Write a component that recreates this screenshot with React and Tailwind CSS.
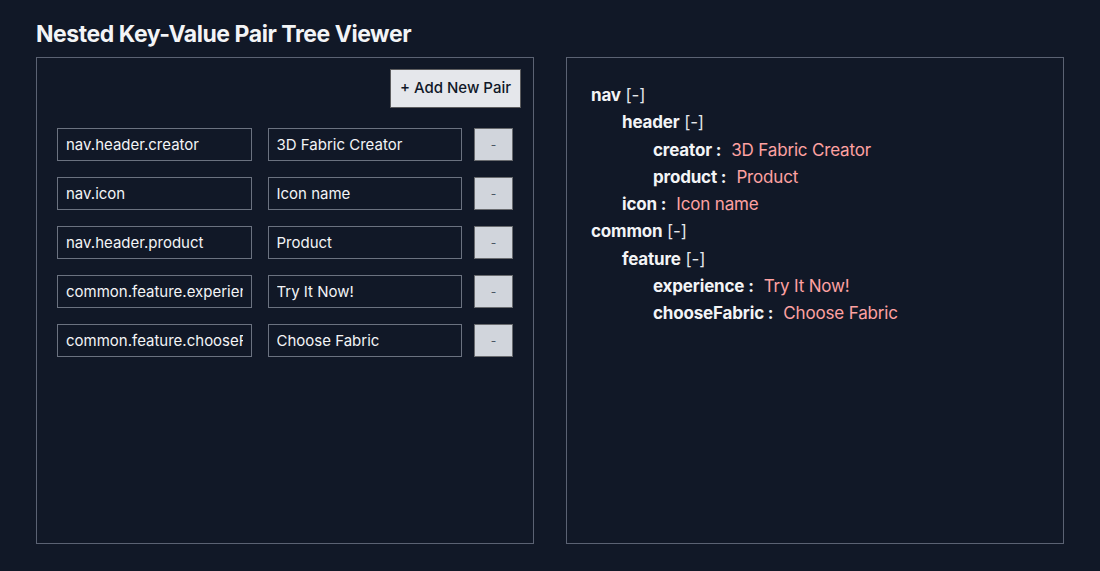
import { useState } from 'react'

// Пары ключ-значение, из которых строится дерево
const INITIAL_PAIRS = [
    { key: 'nav.header.creator', value: '3D Fabric Creator' },
    { key: 'nav.icon', value: 'Icon name' },
    { key: 'nav.header.product', value: 'Product' },
    { key: 'common.feature.experience', value: 'Try It Now!' },
    { key: 'common.feature.chooseFabric', value: 'Choose Fabric' },
]

// Собираем вложенный объект из ключей с точками
function buildTree(pairs) {
    const root = {}
    pairs.forEach(({ key, value }) => {
        const parts = key.split('.')
        let node = root
        parts.forEach((part, i) => {
            if (i === parts.length - 1) {
                node[part] = value
            } else {
                if (typeof node[part] !== 'object') node[part] = {}
                node = node[part]
            }
        })
    })
    return root
}

function TreeNode({ name, value }) {
    const [open, setOpen] = useState(true)

    if (typeof value === 'string') {
        return (
            <div className="flex">
                <span className="font-bold text-gray-100">{name} :</span>
                <span className="ml-[10px] text-red-300">{value}</span>
            </div>
        )
    }

    return (
        <div>
            <div>
                <span className="font-bold text-gray-100">{name}</span>{' '}
                <span className="cursor-pointer text-gray-200" onClick={() => setOpen(!open)}>
                    {open ? '[-]' : '[+]'}
                </span>
            </div>
            {open && (
                <div className="pl-[31px]">
                    {Object.entries(value).map(([k, v]) => (
                        <TreeNode key={k} name={k} value={v} />
                    ))}
                </div>
            )}
        </div>
    )
}

export default function App() {
    const [pairs, setPairs] = useState(INITIAL_PAIRS)

    const updatePair = (index, field, text) => {
        setPairs(pairs.map((p, i) => (i === index ? { ...p, [field]: text } : p)))
    }

    const removePair = (index) => {
        setPairs(pairs.filter((_, i) => i !== index))
    }

    const tree = buildTree(pairs)

    return (
        <div
            className="min-h-[571px] bg-[#111827] px-9 pt-[18px] pb-7 text-gray-100"
            style={{ fontFamily: 'Inter, "Noto Sans", sans-serif' }}
        >
            <h1 className="mb-[7px] text-[23px] leading-8 font-bold tracking-[-0.02em] text-gray-100">
                Nested Key-Value Pair Tree Viewer
            </h1>

            <div className="flex gap-8">
                {/* Левая панель — редактор пар */}
                <div className="h-[487px] w-[498px] shrink-0 border border-[#5b6273] px-3 pt-[11px] pb-3">
                    <div className="flex justify-end">
                        <button
                            onClick={() => setPairs([...pairs, { key: '', value: '' }])}
                            className="h-[39px] w-[131px] border border-black/60 bg-gray-200 text-[15px] font-medium text-gray-900"
                        >
                            + Add New Pair
                        </button>
                    </div>

                    <div className="mt-5 flex flex-col gap-4 px-2">
                        {pairs.map((pair, i) => (
                            <div key={i} className="flex items-center">
                                <input
                                    value={pair.key}
                                    onChange={(e) => updatePair(i, 'key', e.target.value)}
                                    className="h-[33px] w-0 flex-1 border border-[#6b7280] bg-transparent px-2 text-[15px] text-gray-100 outline-none"
                                />
                                <input
                                    value={pair.value}
                                    onChange={(e) => updatePair(i, 'value', e.target.value)}
                                    className="ml-4 h-[33px] w-0 flex-1 border border-[#6b7280] bg-transparent px-2 text-[15px] text-gray-100 outline-none"
                                />
                                <button
                                    onClick={() => removePair(i)}
                                    className="ml-3 h-[33px] w-[39px] border border-black/50 bg-gray-300 text-xs text-gray-600"
                                >
                                    -
                                </button>
                            </div>
                        ))}
                    </div>
                </div>

                {/* Правая панель — дерево */}
                <div className="h-[487px] w-[498px] shrink-0 border border-[#5b6273] p-6 text-[17px] leading-[27.3px] tracking-[-0.01em]">
                    {Object.entries(tree).map(([k, v]) => (
                        <TreeNode key={k} name={k} value={v} />
                    ))}
                </div>
            </div>
        </div>
    )
}
